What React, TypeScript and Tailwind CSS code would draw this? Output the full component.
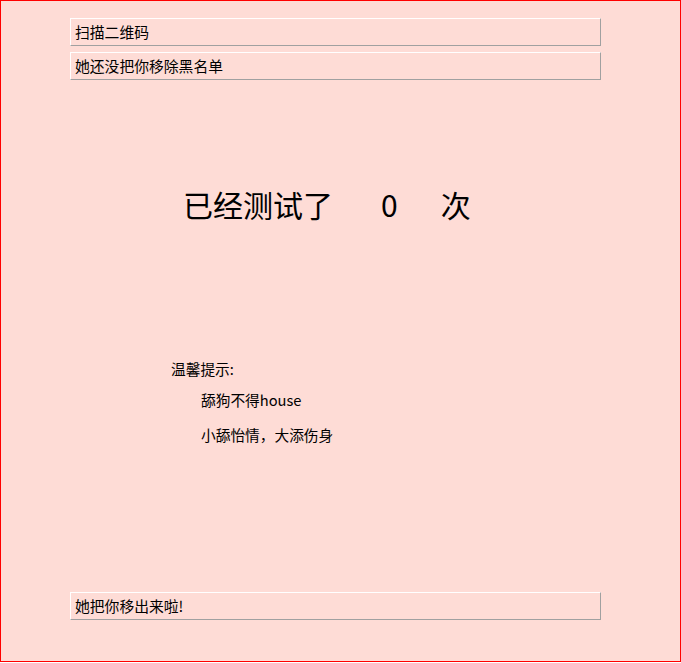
const boxClass =
  'flex h-[28px] w-[531px] items-center border border-t-white border-l-white border-b-[#a0a0a0] border-r-[#a0a0a0] pl-[4px] text-[14.8px] text-black'

export default function App() {
  return (
    <div
      className="flex h-[662px] w-[681px] flex-col border border-[#ff0000] bg-[#fedcd6] pl-[69px]"
      style={{ fontFamily: '"Noto Sans CJK SC", "Noto Sans", sans-serif' }}
    >
      <div className={`${boxClass} mt-[17px]`}>扫描二维码</div>
      <div className={`${boxClass} mt-[6px]`}>她还没把你移除黑名单</div>

      <div className="mt-[104px] flex h-[40px] items-center pl-[113px] text-[30px] leading-[40px] text-black">
        <span>已经测试了</span>
        <span className="ml-[48px]">0</span>
        <span className="ml-[43px]">次</span>
      </div>

      <div className="mt-[135px] pl-[101px] text-[14.7px] text-black">
        <p className="leading-[20px]">温馨提示:</p>
        <p className="mt-[11px] pl-[30px] leading-[20px]">舔狗不得house</p>
        <p className="mt-[15px] pl-[30px] leading-[20px]">小舔怡情，大添伤身</p>
      </div>

      <div className={`${boxClass} mt-auto mb-[41px]`}>她把你移出来啦!</div>
    </div>
  )
}
